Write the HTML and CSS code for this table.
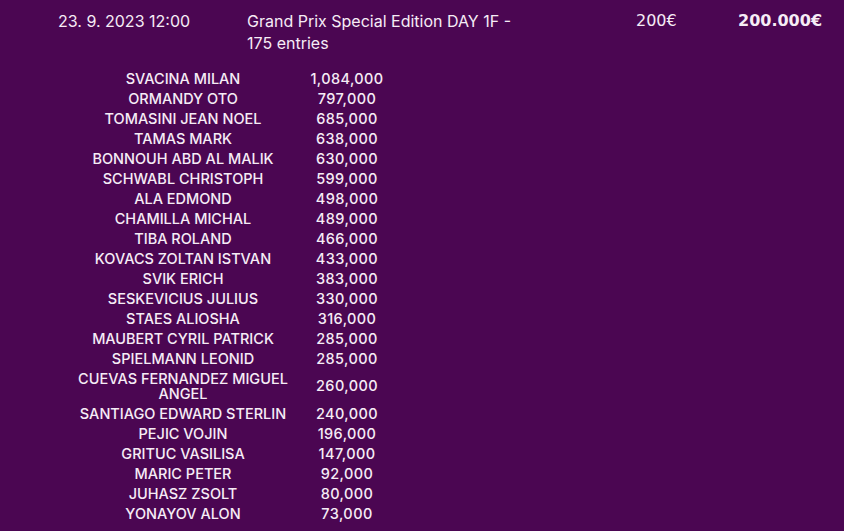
FILE: index.html
```html
<!DOCTYPE html>
<html lang="en">
<head>
<meta charset="utf-8">
<title>Results</title>
<link rel="stylesheet" href="styles.css">
</head>
<body>
<div class="page">
  <div class="event">
    <div class="date">23. 9. 2023 12:00</div>
    <div class="title">Grand Prix Special Edition DAY 1F - 175 entries</div>
    <div class="buyin">200€</div>
    <div class="prize">200.000€</div>
  </div>
  <div class="results">
    <div class="name">SVACINA MILAN</div><div class="amount">1,084,000</div>
    <div class="name">ORMANDY OTO</div><div class="amount">797,000</div>
    <div class="name">TOMASINI JEAN NOEL</div><div class="amount">685,000</div>
    <div class="name">TAMAS MARK</div><div class="amount">638,000</div>
    <div class="name">BONNOUH ABD AL MALIK</div><div class="amount">630,000</div>
    <div class="name">SCHWABL CHRISTOPH</div><div class="amount">599,000</div>
    <div class="name">ALA EDMOND</div><div class="amount">498,000</div>
    <div class="name">CHAMILLA MICHAL</div><div class="amount">489,000</div>
    <div class="name">TIBA ROLAND</div><div class="amount">466,000</div>
    <div class="name">KOVACS ZOLTAN ISTVAN</div><div class="amount">433,000</div>
    <div class="name">SVIK ERICH</div><div class="amount">383,000</div>
    <div class="name">SESKEVICIUS JULIUS</div><div class="amount">330,000</div>
    <div class="name">STAES ALIOSHA</div><div class="amount">316,000</div>
    <div class="name">MAUBERT CYRIL PATRICK</div><div class="amount">285,000</div>
    <div class="name">SPIELMANN LEONID</div><div class="amount">285,000</div>
    <div class="name">CUEVAS FERNANDEZ MIGUEL ANGEL</div><div class="amount">260,000</div>
    <div class="name">SANTIAGO EDWARD STERLIN</div><div class="amount">240,000</div>
    <div class="name">PEJIC VOJIN</div><div class="amount">196,000</div>
    <div class="name">GRITUC VASILISA</div><div class="amount">147,000</div>
    <div class="name">MARIC PETER</div><div class="amount">92,000</div>
    <div class="name">JUHASZ ZSOLT</div><div class="amount">80,000</div>
    <div class="name">YONAYOV ALON</div><div class="amount">73,000</div>
  </div>
</div>
</body>
</html>
```

FILE: styles.css
```css
html, body {
  margin: 0;
  padding: 0;
  background: #4b0652;
}
body {
  width: 844px;
  height: 531px;
  overflow: hidden;
  color: #f6ecf6;
  font-family: Inter, "Noto Sans", sans-serif;
}
.page {
  padding-top: 10px;
}
.event {
  display: grid;
  grid-template-columns: 189px 389px 102px auto;
  padding-left: 58px;
  font-size: 16px;
  line-height: 22px;
}
.title {
  max-width: 285px;
}
.buyin, .prize {
  font-family: "DejaVu Sans", Verdana, sans-serif;
  font-size: 16px;
}
.prize {
  font-weight: bold;
}
.results {
  display: grid;
  grid-template-columns: 220px 106px;
  margin-left: 73px;
  margin-top: 14px;
  font-size: 14.5px;
  font-weight: 500;
  line-height: 15px;
}
.name, .amount {
  padding: 2.5px 0;
  text-align: center;
  display: flex;
  align-items: center;
  justify-content: center;
}
.amount {
  padding-left: 2px;
  letter-spacing: 0.4px;
}
```
